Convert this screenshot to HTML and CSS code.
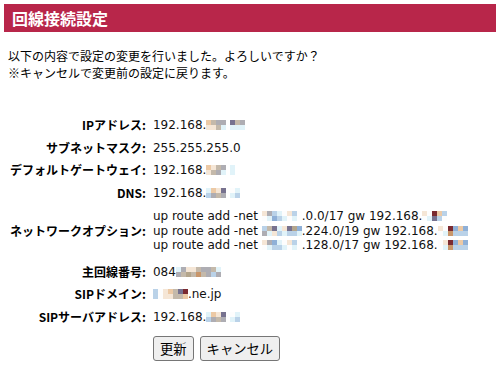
FILE: index.html
```html
<!DOCTYPE html>
<html lang="ja">
<head>
    <meta charset="UTF-8">
    <title>回線接続設定</title>
    <link rel="stylesheet" href="styles.css">
</head>
<body>

    <div class="title-bar">
        <h1>回線接続設定</h1>
    </div>

    <p class="message">
        以下の内容で設定の変更を行いました。よろしいですか？<br>
        ※キャンセルで変更前の設定に戻ります。
    </p>

    <table class="settings">
        <tr>
            <th>IPアドレス:</th>
            <td>192.168.<span class="mz"><i class="k2"></i><i class="k1"></i><i class="k3"></i><i class="k1"></i><i class="k4"></i><i class="k3"></i><i class="k4"></i><i class="k6"></i></span><span class="mz gap"><i class="k5"></i><i class="k6"></i><i class="k3"></i><i class="k6"></i><i class="k4"></i><i class="k6"></i></span></td>
        </tr>
        <tr>
            <th>サブネットマスク:</th>
            <td>255.255.255.0</td>
        </tr>
        <tr>
            <th>デフォルトゲートウェイ:</th>
            <td>192.168.<span class="mz"><i class="k2"></i><i class="k1"></i><i class="k1"></i><i class="k3"></i><i class="k3"></i><i class="k4"></i><i class="k4"></i><i class="k6"></i></span><span class="mz gap"><i class="k6"></i><i class="k6"></i></span></td>
        </tr>
        <tr>
            <th>DNS:</th>
            <td>192.168.<span class="mz"><i class="k6"></i><i class="k7"></i><i class="k2"></i><i class="k4"></i><i class="k1"></i><i class="k3"></i><i class="k5"></i><i class="k4"></i></span><span class="mz gap"><i class="k0"></i><i class="k6"></i><i class="k6"></i><i class="k7"></i></span></td>
        </tr>
        <tr class="routes">
            <th>ネットワークオプション:</th>
            <td>
                <div>up route add -net <span class="mz"><i class="k1"></i><i class="k0"></i><i class="k4"></i><i class="k6"></i><i class="k7"></i><i class="k8"></i><i class="k6"></i><i class="k7"></i><i class="k0"></i><i class="k6"></i><i class="k1"></i><i class="k0"></i><i class="k7"></i><i class="k6"></i><i class="k0"></i><i class="k0"></i></span>.0.0/17 gw 192.168.<span class="mz"><i class="k1"></i><i class="k0"></i><i class="k0"></i><i class="k6"></i><i class="k9"></i><i class="k5"></i><i class="k2"></i><i class="k7"></i><i class="k7"></i><i class="k0"></i></span></div>
                <div>up route add -net <span class="mz"><i class="k7"></i><i class="k4"></i><i class="k3"></i><i class="k6"></i><i class="k5"></i><i class="k1"></i><i class="k6"></i><i class="k7"></i><i class="k1"></i><i class="k6"></i><i class="k5"></i><i class="k7"></i><i class="kb"></i><i class="k7"></i><i class="k8"></i><i class="k6"></i></span>.224.0/19 gw 192.168.<span class="mz"><i class="k1"></i><i class="k0"></i><i class="k0"></i><i class="k6"></i><i class="k9"></i><i class="ka"></i><i class="k8"></i><i class="k7"></i><i class="k2"></i><i class="k7"></i><i class="k8"></i><i class="k7"></i></span></div>
                <div>up route add -net <span class="mz"><i class="k1"></i><i class="k0"></i><i class="k4"></i><i class="k6"></i><i class="k8"></i><i class="k7"></i><i class="k6"></i><i class="k7"></i><i class="k0"></i><i class="k6"></i><i class="k1"></i><i class="k0"></i><i class="k7"></i><i class="k6"></i><i class="k0"></i><i class="k0"></i></span>.128.0/17 gw 192.168.<span class="mz"><i class="k0"></i><i class="k0"></i><i class="k1"></i><i class="k6"></i><i class="k9"></i><i class="ka"></i><i class="k8"></i><i class="k7"></i><i class="k2"></i><i class="k7"></i><i class="k8"></i><i class="k7"></i></span></div>
            </td>
        </tr>
        <tr>
            <th>主回線番号:</th>
            <td>084<span class="mz"><i class="k6"></i><i class="k4"></i><i class="k4"></i><i class="k3"></i><i class="k1"></i><i class="kb"></i><i class="k1"></i><i class="k3"></i><i class="k3"></i><i class="ka"></i><i class="k4"></i><i class="k3"></i><i class="k4"></i><i class="k4"></i><i class="k3"></i><i class="k7"></i><i class="k6"></i><i class="k4"></i></span></td>
        </tr>
        <tr>
            <th>SIPドメイン:</th>
            <td><span class="mz"><i class="k7"></i><i class="k7"></i><i class="k0"></i><i class="k0"></i><i class="k1"></i><i class="k1"></i><i class="k2"></i><i class="k1"></i><i class="k3"></i><i class="k3"></i><i class="k5"></i><i class="k3"></i><i class="k9"></i><i class="k2"></i></span>.ne.jp</td>
        </tr>
        <tr>
            <th>SIPサーバアドレス:</th>
            <td>192.168.<span class="mz"><i class="k6"></i><i class="k7"></i><i class="k2"></i><i class="k4"></i><i class="k1"></i><i class="k3"></i><i class="k5"></i><i class="k4"></i></span><span class="mz gap"><i class="k0"></i><i class="k6"></i><i class="k6"></i><i class="k7"></i></span></td>
        </tr>
        <tr class="actions">
            <th></th>
            <td>
                <div class="button-container">
                    <button type="button">更新</button>
                    <button type="button">キャンセル</button>
                </div>
            </td>
        </tr>
    </table>

</body>
</html>
```

FILE: styles.css
```css
* {
    box-sizing: border-box;
}

body {
    margin: 0;
    padding: 4px 0 0 8px;
    background: #fff;
    color: #000;
    font-family: "DejaVu Sans", "Noto Sans CJK JP", sans-serif;
    font-size: 12px;
}

/* Title */
.title-bar {
    margin-left: -4px;
    height: 28px;
    background: #b8264a;
}

.title-bar h1 {
    margin: 0;
    padding-left: 8px;
    font-family: "Noto Sans CJK JP", sans-serif;
    font-size: 16px;
    font-weight: bold;
    line-height: 28px;
    color: #fff;
}

.message {
    margin: 15px 0 0;
    font-family: "Noto Sans CJK JP", sans-serif;
    line-height: 17px;
}

/* Settings table */
.settings {
    margin-top: 33px;
    border-collapse: collapse;
}

.settings th {
    padding: 3px 6px 3px 2px;
    text-align: right;
    white-space: nowrap;
    font-family: "Noto Sans CJK JP", sans-serif;
    font-weight: bold;
    line-height: 16.5px;
    vertical-align: middle;
}

.settings td {
    padding: 3px 0 3px 1px;
    line-height: 16.5px;
    white-space: nowrap;
    color: #111;
}

.settings .routes th,
.settings .routes td {
    padding-top: 5px;
    padding-bottom: 8px;
}

.settings .routes td {
    line-height: 14.5px;
}

.settings .actions td {
    padding-top: 8px;
}

.button-container {
    display: flex;
    gap: 6px;
}

.button-container button {
    height: 25px;
    padding: 0 6px;
    border: 1px solid #767676;
    border-radius: 3px;
    background: #efefef;
    color: #000;
    font-family: "Noto Sans CJK JP", sans-serif;
    font-size: 13.33px;
    line-height: 21px;
}

/* Blurred values */
.mz {
    display: inline-grid;
    grid-auto-flow: column;
    grid-template-rows: 5px 5px;
    grid-auto-columns: 5px;
    margin-bottom: 2px;
    line-height: 0;
    vertical-align: text-bottom;
}

.mz.gap {
    margin-left: 4px;
}

.mz i {
    display: block;
}

.k0 { background: #fdfdfd; }
.k1 { background: #f5e6d6; }
.k2 { background: #ecc9a5; }
.k3 { background: #c4b9aa; }
.k4 { background: #aeadb3; }
.k5 { background: #77728f; }
.k6 { background: #e1f3f9; }
.k7 { background: #bad2e8; }
.k8 { background: #8fb0d7; }
.k9 { background: #7b2a30; }
.ka { background: #c9966a; }
.kb { background: #b3a58c; }
```
